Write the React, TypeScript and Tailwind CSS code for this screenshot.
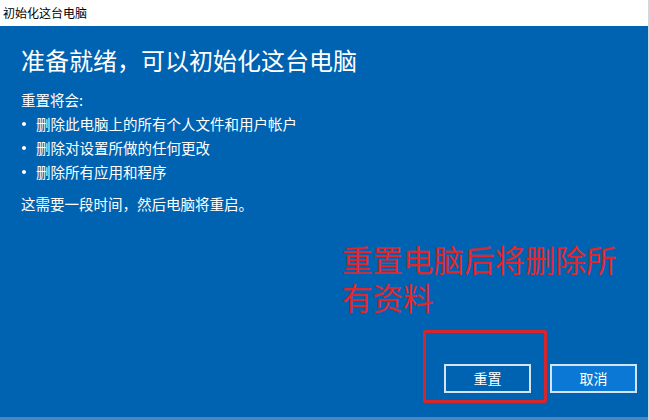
const FONT = "font-['Microsoft_YaHei','Noto_Sans_CJK_SC',sans-serif]";

const ITEMS = ["删除此电脑上的所有个人文件和用户帐户", "删除对设置所做的任何更改", "删除所有应用和程序"];

export default function App() {
  return (
    <div className={`w-[650px] h-[420px] flex flex-col border-r-2 border-[#d4d6d9] ${FONT}`}>
      <div className="h-[26px] bg-white flex items-center pl-[3px] text-[12px] text-black">
        初始化这台电脑
      </div>
      <div className="flex-1 bg-[#0063b1] text-white flex flex-col pl-[21px] pr-[11px]">
        <h1 className="mt-[18px] text-[24px] leading-[32px] font-normal">准备就绪，可以初始化这台电脑</h1>
        <p className="mt-[12px] text-[14.5px] leading-[24px]">重置将会:</p>
        <ul className="text-[14.5px] leading-[24px]">
          {ITEMS.map((t) => (
            <li key={t} className="flex items-center">
              <span className="ml-[1px] mr-[10px] w-[4px] h-[4px] rounded-full bg-white" />
              {t}
            </li>
          ))}
        </ul>
        <p className="mt-[8px] text-[14.5px] leading-[24px]">这需要一段时间，然后电脑将重启。</p>
        <div className="mt-[26px] ml-[321px] text-[30.5px] leading-[38px] text-[#e0272d] font-['Liberation_Sans','Noto_Sans_CJK_SC',sans-serif]">
          <p>重置电脑后将删除所</p>
          <p>有资料</p>
        </div>
        <div className="mt-[12px] flex items-end justify-end">
          <div className="border-[3px] border-[#d4262c] rounded-[2px] pl-[18px] pr-[13px] pt-[31px] pb-[7px]">
            <button className="w-[87px] h-[29px] border-2 border-[#d3e4f4] bg-[#0063b1] text-[14px] text-white">
              重置
            </button>
          </div>
          <button className="ml-[3px] mb-[10px] w-[87px] h-[29px] border-2 border-[#d3e4f4] bg-[#0a78d4] text-[14px] text-white">
            取消
          </button>
        </div>
      </div>
      <div className="h-[3px] bg-[#4b86bd]" />
    </div>
  );
}
